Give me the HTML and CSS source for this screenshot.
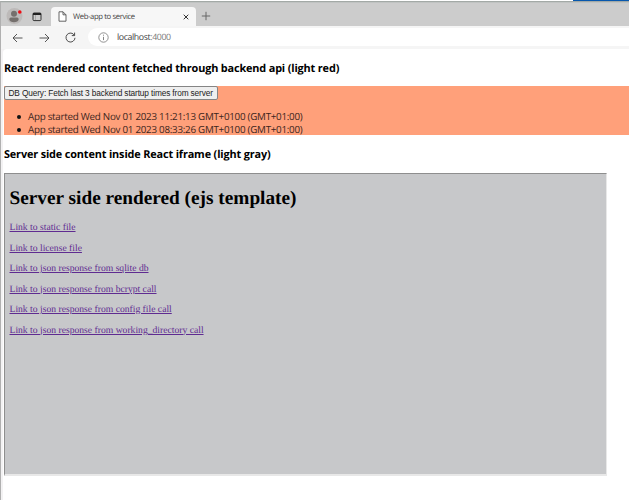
FILE: index.html
```html
<!DOCTYPE html>
<html lang="en">
<head>
<meta charset="utf-8">
<title>Web-app to service</title>
<link rel="stylesheet" href="styles.css">
</head>
<body>
<div class="desktop-strip"><span class="desktop-accent"></span></div>
<div class="window">
  <header class="tabbar">
    <svg class="avatar" width="18" height="18" viewBox="0 0 18 18"><circle cx="8.5" cy="9" r="8" fill="#bdbab9"/><circle cx="8" cy="6.7" r="3" fill="#75706d"/><path d="M3.3 12.2q0-1.6 1.6-1.6h6.2q1.6 0 1.6 1.6c0 4-9.4 4-9.4 0z" fill="#75706d"/><circle cx="13.8" cy="5" r="1.8" fill="#f00b12"/></svg>
    <svg class="panel-icon" width="10" height="10" viewBox="0 0 10 10"><rect x="1" y="1" width="8" height="7.6" rx="1" fill="none" stroke="#333"/><path d="M1 2h8" stroke="#222" stroke-width="2"/><path d="M3.5 3v5" stroke="#999" stroke-width=".7"/></svg>
    <div class="tab">
      <svg class="file-icon" width="9" height="11" viewBox="0 0 9 11"><path d="M1 .8h4l3 3v6.4H1zM5 .8v3h3" fill="#fff" stroke="#555" stroke-width=".9"/></svg>
      <span class="tab-title">Web-app to service</span>
      <svg class="close" width="6" height="6" viewBox="0 0 6 6"><path d="M.7.7l4.6 4.6M5.3.7L.7 5.3" stroke="#333" stroke-width="1"/></svg>
    </div>
    <svg class="plus" width="10" height="10" viewBox="0 0 10 10"><path d="M5 .8v8.4M.8 5h8.4" stroke="#666"/></svg>
  </header>
  <nav class="toolbar">
    <svg class="back" width="11" height="10" viewBox="0 0 11 10"><path d="M10.5 5H1M5 1L1 5l4 4" fill="none" stroke="#444" stroke-width=".9"/></svg>
    <svg class="forward" width="11" height="10" viewBox="0 0 11 10"><path d="M.5 5H10M6 1l4 4-4 4" fill="none" stroke="#444" stroke-width=".9"/></svg>
    <svg class="reload" width="11" height="11" viewBox="0 0 11 11"><path d="M9.4 3.3A4.5 4.5 0 1 0 10 5.8M9.6.6v3H6.8" fill="none" stroke="#444" stroke-width=".95"/></svg>
    <div class="address">
      <svg class="info" width="11" height="11" viewBox="0 0 11 11"><circle cx="5.5" cy="5.5" r="4.7" fill="none" stroke="#777" stroke-width=".8"/><path d="M5.5 4.8v3.3M5.5 2.7v1" stroke="#777" stroke-width=".9"/></svg>
      <span class="url">localhost<span class="port">:4000</span></span>
    </div>
  </nav>
  <main class="page">
    <h3 class="heading heading-api">React rendered content fetched through backend api (light red)</h3>
    <section class="api">
      <button class="query"><span>DB Query: Fetch last 3 backend startup times from server</span></button>
      <ul class="starts">
        <li><span>App started Wed Nov 01 2023 11:21:13 GMT+0100 (GMT+01:00)</span></li>
        <li><span>App started Wed Nov 01 2023 08:33:26 GMT+0100 (GMT+01:00)</span></li>
      </ul>
    </section>
    <h3 class="heading heading-frame">Server side content inside React iframe (light gray)</h3>
    <section class="frame">
      <h1 class="frame-title">Server side rendered (ejs template)</h1>
      <div class="links">
        <a href="#">Link to static file</a>
        <a href="#">Link to license file</a>
        <a href="#">Link to json response from sqlite db</a>
        <a href="#">Link to json response from bcrypt call</a>
        <a href="#">Link to json response from config file call</a>
        <a href="#">Link to json response from working_directory call</a>
      </div>
    </section>
  </main>
</div>
</body>
</html>
```
FILE: styles.css
```css
* { box-sizing: border-box; }
body { margin: 0; width: 629px; height: 500px; overflow: hidden; background: #fff; font-family: "Open Sans", "Noto Sans", sans-serif; text-rendering: geometricPrecision; }
svg { display: block; flex: none; }
.desktop-strip { height: 1px; display: flex; justify-content: flex-end; }
.desktop-accent { width: 56px; background: #0757ad; }
.window { height: 499px; border-top: 1px solid #a3a9a6; border-left: 1px solid #b0b0b0; background: #f3f2f3; }
.tabbar { height: 24px; background: #ccc; display: flex; border-top: 1px solid #c0c3c2; }
.avatar { margin: 4px 0 0 5px; }
.panel-icon { margin: 9px 0 0 8px; }
.tab { width: 145px; height: 19px; margin: 4px 0 0 9px; padding: 0 7px 0 7px; display: flex; align-items: center; background: #f7f7f7; border-radius: 4px 4px 0 0; }
.tab-title { margin-left: 6px; font-size: 7.7px; letter-spacing: -.38px; line-height: 18px; color: #444; white-space: nowrap; }
.close { margin-left: auto; }
.plus { margin: 8px 0 0 5px; }
.toolbar { height: 23px; display: flex; align-items: center; background: #f5f5f5; }
.back { margin-left: 11px; }
.forward { margin-left: 16px; }
.reload { margin-left: 15px; }
.address { flex: 1; height: 18px; margin-left: 12px; margin-top: -1px; padding-left: 10px; display: flex; align-items: center; background: #fff; border-radius: 9px 0 0 9px; }
.url { margin-left: 8px; font-size: 8.8px; letter-spacing: -.4px; line-height: 17px; color: #444; }
.port { color: #777; }
.page { height: 451px; margin-left: 2px; padding-left: 1px; background: #fff; border-top-left-radius: 4px; }
.heading { margin: 0; font-size: 10.9px; letter-spacing: -.155px; font-weight: 700; color: #000; white-space: nowrap; }
.heading-api { height: 37px; padding-top: 13px; line-height: 14px; }
.api { height: 49px; background: #ffa07a; }
.query { display: block; width: 214px; height: 14px; padding: 0 0 0 3.5px; border: 1px solid #858585; border-radius: 2px; background: #efefef; color: #222; font: 8.3px/12px "Liberation Sans", sans-serif; letter-spacing: -.13px; text-align: left; white-space: nowrap; }
.starts { margin: 0; padding: 11px 0 0 24px; font-size: 9.8px; letter-spacing: -.26px; line-height: 12.5px; color: #3c251d; list-style: none; white-space: nowrap; }
.starts li { display: flex; align-items: center; height: 12.5px; }
.starts li::before { content: ""; width: 4px; height: 4px; margin-left: -11px; margin-right: 7px; border-radius: 50%; background: #111; }
.heading-frame { height: 38px; padding-top: 13px; line-height: 14px; }
.frame { width: 603px; height: 303px; padding: 14px 0 0 4.5px; border: 1px solid #8e8e8e; border-right: 1px solid #e8e8e8; border-bottom: 2px solid #e8e8e8; background: #c7c8ca; font-family: "Liberation Serif", serif; }
.frame-title { margin: 0; font-size: 19.3px; line-height: 22px; color: #000; white-space: nowrap; }
.links { display: flex; flex-direction: column; align-items: flex-start; gap: 8.5px; margin-top: 12px; }
.links a { font-size: 9.65px; line-height: 12px; color: #5f2b91; white-space: nowrap; }
```
